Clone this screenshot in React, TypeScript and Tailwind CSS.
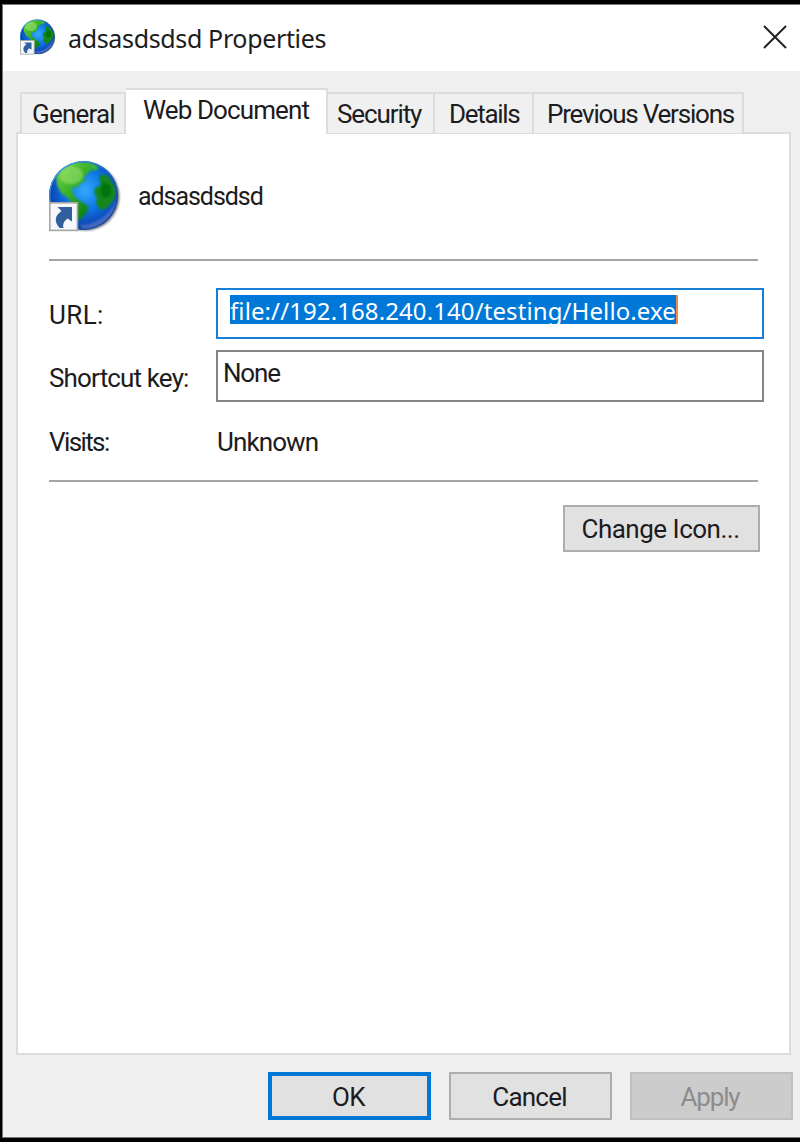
import React from "react";

function Globe({ id, className }: { id: string; className: string }) {
  return (
    <svg viewBox="0 0 72 72" className={className} aria-hidden="true">
      <defs>
        <radialGradient id={`${id}-sea`} cx="0.52" cy="0.42" r="0.6">
          <stop offset="0" stopColor="#36a8ff" />
          <stop offset="0.45" stopColor="#0f7ae6" />
          <stop offset="0.8" stopColor="#0b4abb" />
          <stop offset="1" stopColor="#0a2c86" />
        </radialGradient>
        <linearGradient id={`${id}-land`} x1="0.1" y1="0" x2="0.8" y2="1">
          <stop offset="0" stopColor="#6fd246" />
          <stop offset="0.45" stopColor="#3cb32a" />
          <stop offset="1" stopColor="#067a10" />
        </linearGradient>
        <linearGradient id={`${id}-rim`} x1="0" y1="0" x2="1" y2="1">
          <stop offset="0" stopColor="#3fb9f2" />
          <stop offset="0.5" stopColor="#1766c8" />
          <stop offset="1" stopColor="#233e80" />
        </linearGradient>
        <clipPath id={`${id}-clip`}>
          <circle cx="34.5" cy="35.5" r="34.5" />
        </clipPath>
        <filter id={`${id}-soft`} x="-10%" y="-10%" width="120%" height="120%">
          <feGaussianBlur stdDeviation="1" />
        </filter>
      </defs>
      <circle cx="36.4" cy="36.6" r="34" fill="#3c4654" opacity="0.75" filter={`url(#${id}-soft)`} />
      <circle cx="34.5" cy="35.5" r="34.5" fill={`url(#${id}-sea)`} />
      <g clipPath={`url(#${id}-clip)`}>
        <g filter={`url(#${id}-soft)`}>
          <path
            d="M7 17 L15 6 L26 1 L37 2 L42 5 L43 10 L38 14 L35 17 L36 22 L31 23 L29 28 L24 26 L23 32 L27 38 L33 42 L39 46 L38 52 L30 61 L26 54 L25 46 L19 38 L12 33 L8 25 Z"
            fill={`url(#${id}-land)`}
          />
          <path d="M50 18 L53 14 L59 16 L66 27 L67 34 L64 41 L58 48 L52 50 L47 44 L48 37 L45 33 L46 28 L52 25 Z" fill="#12861c" />
          <path d="M54 22 L62 26 L62 35 L55 38 L51 32 Z" fill="#057410" />
          <path d="M38 2 L46 4 L50 8 L46 11 L41 8 Z" fill="#3cb63a" />
          <ellipse cx="22" cy="15" rx="12" ry="9" fill="#b2ed80" opacity="0.45" />
          <path d="M30 65 C48 65 62 54 67 40 C68 58 54 71 35 71 Z" fill="#a5b2ea" opacity="0.35" />
        </g>
        <circle cx="34.5" cy="35.5" r="33.8" fill="none" stroke={`url(#${id}-rim)`} strokeWidth="1.4" />
      </g>
      <rect x="0.8" y="42.8" width="27.6" height="27.6" fill="#f5f7fa" stroke="#a6a6a6" strokeWidth="1.6" />
      <path d="M8.5 47 H23 V61.5 L18.7 58.5 C15 61 13.5 64 14.5 68 H10.5 C5 61.5 5.5 56 12.5 51 Z" fill="#315f9e" />
    </svg>
  );
}

function Tab({ label, className }: { label: string; className: string }) {
  return (
    <button
      role="tab"
      className={`h-[41px] shrink-0 border-t-2 border-r-2 border-[#dcdcdc] bg-[#f0f0f0] text-left whitespace-nowrap ${className}`}
    >
      {label}
    </button>
  );
}

export default function App() {
  return (
    <div className="h-[1142px] w-[800px] overflow-hidden bg-black pt-1 pl-[2px] font-['Roboto',sans-serif] text-[26px] leading-[30px] tracking-[-0.5px] text-[#1c1c20]">
      <div className="flex h-[1134px] w-[798px] flex-col border-t border-b border-l border-[#777] bg-[#efefef]">
        <header className="flex h-[66px] shrink-0 items-center bg-white pr-[12px] pb-[3px] pl-[17px]">
          <Globe id="small" className="size-[36px]" />
          <h1 className="ml-[12px] pt-[2px] font-['Noto_Sans',sans-serif] text-[25px] tracking-[-0.35px]">adsasdsdsd Properties</h1>
          <button aria-label="Close" className="ml-auto">
            <svg viewBox="0 0 26 26" className="size-[26px]" fill="none" stroke="#222" strokeWidth="2">
              <path d="M2 2 24 24M24 2 2 24" />
            </svg>
          </button>
        </header>

        <div role="tablist" className="z-10 mt-[17px] flex h-[45px] shrink-0 items-end pl-[17px]">
          <Tab label="General" className="w-[106px] border-l-2 pl-[10px] tracking-[-0.8px]" />
          <button role="tab" className="h-[46px] w-[202px] shrink-0 self-start border-t-2 border-r-2 border-[#dcdcdc] bg-white pb-[4px] pl-[17px] text-left tracking-[-0.9px] whitespace-nowrap">
            Web Document
          </button>
          <Tab label="Security" className="w-[107px] pl-[9px] tracking-[-1.1px]" />
          <Tab label="Details" className="w-[99px] pl-[14px] tracking-[-1.3px]" />
          <Tab label="Previous Versions" className="w-[210px] pl-[13px] tracking-[-1.2px]" />
        </div>

        <main className="-mt-px ml-[13px] flex h-[923px] w-[775px] shrink-0 flex-col border-2 border-[#dcdcdc] bg-white pl-[31px]">
          <div className="flex h-[125px] items-center">
            <Globe id="large" className="-mt-px size-[72px]" />
            <span className="ml-[17px] text-[25px] tracking-[-1.05px]">adsasdsdsd</span>
          </div>
          <div className="h-[2px] w-[709px] bg-[#a5a5a5]" />
          <div className="mt-[27px] flex">
            <label className="w-[167px] pt-[12px] tracking-[0.4px]">URL:</label>
            <div className="h-[51px] w-[548px] border-2 border-[#1780d6] pt-[5px] pl-[12px]">
              <span className="block h-[29px] w-[448px] border-r-2 border-[#ef8b43] bg-[#0078d7] font-['Noto_Sans',sans-serif] text-[24px] leading-[31px] tracking-[0.1px] whitespace-nowrap text-white">
                file://192.168.240.140/testing/Hello.exe
              </span>
            </div>
          </div>
          <div className="mt-[11px] flex">
            <label className="w-[167px] pt-[13px] tracking-[-0.85px]">Shortcut key:</label>
            <div className="h-[52px] w-[548px] border-2 border-[#858585] pt-[6px] pl-[5px] tracking-[-1.2px]">None</div>
          </div>
          <div className="mt-[25px] flex">
            <span className="w-[168px] tracking-[-1.6px]">Visits:</span>
            <span className="tracking-[-0.9px]">Unknown</span>
          </div>
          <div className="mt-[23px] h-[2px] w-[709px] bg-[#a5a5a5]" />
          <button className="mt-[23px] ml-[514px] h-[47px] w-[197px] border-2 border-[#adadad] bg-[#e1e1e1] pt-px pr-[2px]">
            Change Icon...
          </button>
        </main>

        <footer className="mt-[17px] flex gap-[18px] pl-[265px]">
          <button className="h-[48px] w-[163px] border-4 border-[#0078d7] bg-[#e1e1e1] pt-px pr-[2px]">OK</button>
          <button className="h-[48px] w-[163px] border-2 border-[#adadad] bg-[#e1e1e1] pt-px pr-[2px] tracking-[-0.8px]">Cancel</button>
          <button disabled className="h-[48px] w-[163px] border-2 border-[#bfbfbf] bg-[#cccccc] pt-px pr-[3px] tracking-[-1.2px] text-[#8c8c8c]">Apply</button>
        </footer>
      </div>
    </div>
  );
}
